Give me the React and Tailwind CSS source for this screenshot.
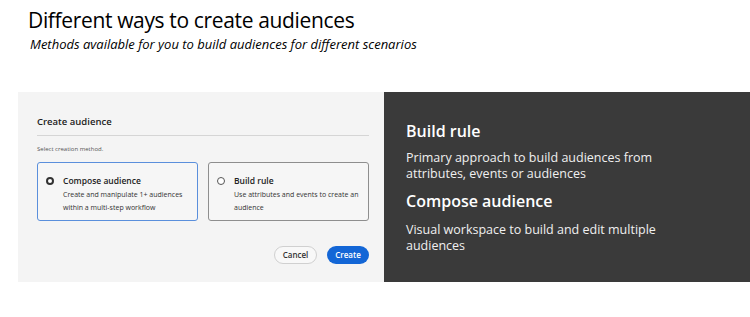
export default function App() {
  return (
    <div className="w-[750px] h-[317px] bg-white overflow-hidden font-['Open_Sans',sans-serif] text-black">
      <div className="pl-[28px] pt-[5px]">
        <h1 className="text-[21px] leading-[30px] tracking-[-0.35px]">Different ways to create audiences</h1>
        <p className="pl-[2px] text-[13px] leading-[18px] italic">
          Methods available for you to build audiences for different scenarios
        </p>
      </div>

      <div className="mt-[39px] ml-[18px] flex h-[190px]">
        <div className="w-[366px] bg-[#f4f4f4] pl-[19px] pr-[15px] pt-[23px]">
          <div className="text-[9.5px] font-semibold text-[#222] leading-[14px]">Create audience</div>
          <div className="mt-[6px] h-px bg-[#d5d5d5]" />
          <div className="mt-[9px] text-[6px] text-[#555] leading-[9px]">Select creation method.</div>
          <div className="mt-[8px] flex gap-[10px]">
            <Card
              selected
              title="Compose audience"
              desc={['Create and manipulate 1+ audiences', 'within a multi-step workflow']}
            />
            <Card
              title="Build rule"
              desc={['Use attributes and events to create an', 'audience']}
            />
          </div>
          <div className="mt-[25px] flex justify-end gap-[10px]">
            <button className="h-[18px] w-[43px] rounded-full border border-[#d0d0d0] bg-[#f8f8f8] text-[8px] font-semibold text-[#333]">
              Cancel
            </button>
            <button className="h-[18px] w-[42px] rounded-full bg-[#1366d6] text-[8px] font-semibold text-white">
              Create
            </button>
          </div>
        </div>

        <div className="w-[366px] bg-[#3a3a3a] pl-[22px] pt-[28px] text-white">
          <div className="text-[16px] font-semibold leading-[22px]">Build rule</div>
          <p className="mt-[8px] text-[12.5px] leading-[16px] text-[#f0f0f0]">
            Primary approach to build audiences from
            <br />
            attributes, events or audiences
          </p>
          <div className="mt-[8px] text-[16px] font-semibold leading-[22px]">Compose audience</div>
          <p className="mt-[10px] text-[12.5px] leading-[16px] text-[#f0f0f0]">
            Visual workspace to build and edit multiple
            <br />
            audiences
          </p>
        </div>
      </div>
    </div>
  )
}

function Card({ selected, title, desc }) {
  return (
    <div
      className={
        selected
          ? 'h-[59px] w-[161px] rounded-[3px] border border-[#5a8fdc] bg-[#f6f6f6] flex pl-[8px] pt-[13px]'
          : 'h-[59px] w-[161px] rounded-[3px] border border-[#8e8e8e] bg-[#f6f6f6] flex pl-[8px] pt-[13px]'
      }
    >
      <div
        className={
          selected
            ? 'mt-[0.5px] h-[8px] w-[8px] rounded-full border-[2.5px] border-[#333] bg-white shrink-0'
            : 'mt-[0.5px] h-[8px] w-[8px] rounded-full border border-[#555] bg-white shrink-0'
        }
      />
      <div className="ml-[9px]">
        <div className="text-[8.5px] font-semibold text-[#222] leading-[10px]">{title}</div>
        <div className="mt-[3px] text-[7px] text-[#333] leading-[12.5px]">
          {desc[0]}
          <br />
          {desc[1]}
        </div>
      </div>
    </div>
  )
}
